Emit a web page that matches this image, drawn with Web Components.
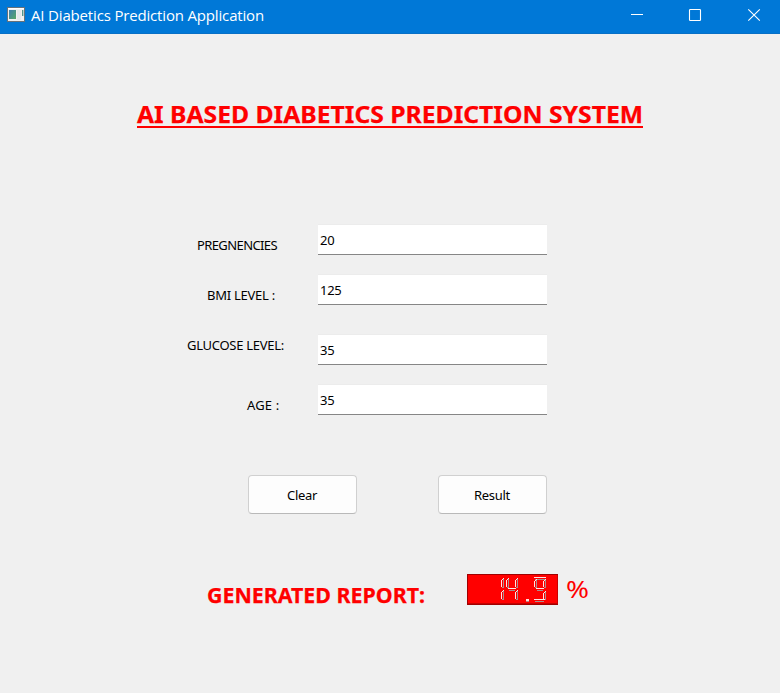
<!DOCTYPE html>
<html lang="en">
<head>
<meta charset="utf-8">
<title>AI Diabetics Prediction Application</title>
<style>
html,body{margin:0;background:#f0f0f0}
</style>
</head>
<body>
<app-window></app-window>
<script>
const define = (name, html, setup) => customElements.define(name, class extends HTMLElement {
  connectedCallback() {
    if (this.shadowRoot) return;
    this.attachShadow({mode: 'open'}).innerHTML = html;
    if (setup) setup(this, this.shadowRoot);
  }
});

// Text line that fills the given width, by tracking or (with "stretch") by glyph width.
define('fit-text', `<style>
:host{display:block;white-space:pre;width:max-content}
span{display:inline-block;transform-origin:0 50%}
</style><span><slot></slot></span>`, (el, root) => {
  const span = root.querySelector('span');
  const natural = span.getBoundingClientRect().width;
  const target = +el.getAttribute('width');
  if (el.hasAttribute('stretch')) span.style.transform = `scaleX(${target / natural})`;
  else span.style.letterSpacing = ((target - natural) / el.textContent.length) + 'px';
});

define('title-bar', `<style>
:host{display:flex;height:34px;box-sizing:border-box;background:#0078d7;border-bottom:1px solid #0870c6;color:#fff;font:15px/20px "Open Sans",sans-serif;padding:5px 0 0 7px}
.icon{display:block;margin:2px 6px 0 0;flex:none}
.controls{margin:1px 0 0 auto;display:flex;width:149px;height:20px}
</style>
<svg class="icon" width="18" height="16" viewBox="0 0 18 16">
<defs><linearGradient id="g" x2="1" y2="1"><stop stop-color="#3d7db0"/><stop offset="1" stop-color="#55a866"/></linearGradient></defs>
<rect x=".5" y=".5" width="17" height="14" fill="#f1f1f1" stroke="#66717a"/>
<path d="M1 1.5h16" stroke="#fff"/><rect x="2" y="3" width="7" height="9" fill="url(#g)"/>
<rect x="10" y="3" width="4" height="10" fill="#e4e8eb"/><rect x="15" y="3" width="1.4" height="6" fill="#55968c"/>
</svg>
<slot></slot>
<svg class="controls" width="149" height="20" viewBox="631 6 149 20" fill="none" stroke="#fff">
<path d="M631 14.5h12"/><rect x="689.5" y="9.5" width="11" height="11" rx=".8" stroke-width="1.1"/>
<path d="M748.3 9.3l11.5 11.4m0-11.4l-11.5 11.4" stroke-width="1.1"/></svg>`);

define('form-row', `<style>
:host{display:flex;height:31px;margin-left:var(--x);font:13px/18px "Noto Sans",sans-serif;color:#000}
.label{width:calc(318px - var(--x));padding-top:calc(12px + var(--dy,0px));flex:none}
.field{box-sizing:border-box;width:229px;height:31px;background:#fff;border-top:1px solid #ececec;border-bottom:1px solid #868686;padding:6px 0 0 2px}
</style><div class="label"><slot name="label"></slot></div><div class="field"><slot></slot></div>`);

define('push-button', `<style>
:host{display:block}
button{display:flex;align-items:center;justify-content:center;box-sizing:border-box;width:109px;height:39px;padding:1px 1px 0 0;background:#fdfdfd;border:1px solid #d0d0d0;border-bottom-color:#b9b9b9;border-radius:4px;color:#000;font:13px/18px "Noto Sans",sans-serif}
</style><button><slot></slot></button>`);

define('lcd-display', `<style>
:host{display:block;width:91px;height:31px}
svg{display:block}
</style><svg width="91" height="31" viewBox="467 574 91 31" shape-rendering="crispEdges" fill="none"></svg>`, (el, root) => {
  // Segment boxes in display coordinates: x, y, width, height.
  const segments = [
    [501,578,3,10],[501,590,3,10],
    [506,578,3,10],[508,588,8,3],[515,578,3,10],[515,590,3,10],
    [526,599,3,3],
    [534,577,12,3],[534,579,3,9],[543,579,3,9],[536,588,8,3],[543,591,3,9],[534,599,11,3]
  ];
  const draw = ([x,y,w,h]) => {
    if (w === 3 && h === 3) return `<rect x="${x}" y="${y}" width="3" height="3" fill="#ffe0e0"/><path d="M${x} ${y+2.5}h3" stroke="#b98080"/>`;
    return h > w
      ? `<path d="M${x+.5} ${y+2}v${h-3}M${x+1} ${y+1.5}h1M${x+2} ${y+.5}h1" stroke="#ffe4e4"/><path d="M${x+2.5} ${y+1}v${h-1}M${x+1} ${y+h-.5}h1" stroke="#a89090"/>`
      : `<path d="M${x} ${y+.5}h${w}" stroke="#ffe4e4"/><path d="M${x+1} ${y+2.5}h${w-2}" stroke="#a89090"/>`;
  };
  root.querySelector('svg').innerHTML =
    '<rect x="467" y="574" width="91" height="31" fill="#f00"/><rect x="467.5" y="574.5" width="90" height="30" stroke="#a00000"/><path d="M468 603.5h89.5V575" stroke="#c80000"/>' +
    segments.map(draw).join('');
});

define('app-window', `<style>
:host{display:flex;flex-direction:column;width:780px;height:693px;overflow:hidden;background:#f0f0f0}
h1,h2{margin:0;color:#f00;font-family:"Noto Sans",sans-serif;font-weight:700;-webkit-text-stroke:.25px #f00}
h1{font-size:23.5px;line-height:30px;padding:65px 0 0 137px}
h1 fit-text{border-bottom:2px solid #f00;height:27px;width:506px}
.form{display:flex;flex-direction:column;padding-top:96px}
.form form-row+form-row{margin-top:19px}
.form form-row.gap{margin-top:29px}
.buttons{display:flex;gap:81px;padding:60px 0 0 248px}
.report{display:flex;padding:60px 0 0 207px;height:40px}
h2{font-size:20.5px;line-height:28px;width:260px;padding-top:7px}
.percent{font:24px/32px "Noto Sans",sans-serif;color:#f00;margin:-1px 0 0 8px}
</style>
<title-bar><fit-text width="233">AI Diabetics Prediction Application</fit-text></title-bar>
<h1><fit-text stretch width="506">AI BASED DIABETICS PREDICTION SYSTEM</fit-text></h1>
<div class="form">
<form-row style="--x:197px"><fit-text slot="label" width="80">PREGNENCIES</fit-text><fit-text width="14.5">20</fit-text></form-row>
<form-row style="--x:207px"><fit-text slot="label" width="68">BMI LEVEL :</fit-text><fit-text width="21.5">125</fit-text></form-row>
<form-row class="gap" style="--x:187px;--dy:-10px"><fit-text slot="label" width="97">GLUCOSE LEVEL:</fit-text><fit-text width="14.5">35</fit-text></form-row>
<form-row style="--x:247px"><fit-text slot="label" width="32.5">AGE :</fit-text><fit-text width="14.5">35</fit-text></form-row>
</div>
<div class="buttons"><push-button><fit-text width="30">Clear</fit-text></push-button><push-button><fit-text width="36">Result</fit-text></push-button></div>
<div class="report"><h2><fit-text stretch width="218">GENERATED REPORT:</fit-text></h2><lcd-display role="img" aria-label="14.9"></lcd-display><fit-text class="percent" stretch width="23">%</fit-text></div>`);
</script>
</body>
</html>
